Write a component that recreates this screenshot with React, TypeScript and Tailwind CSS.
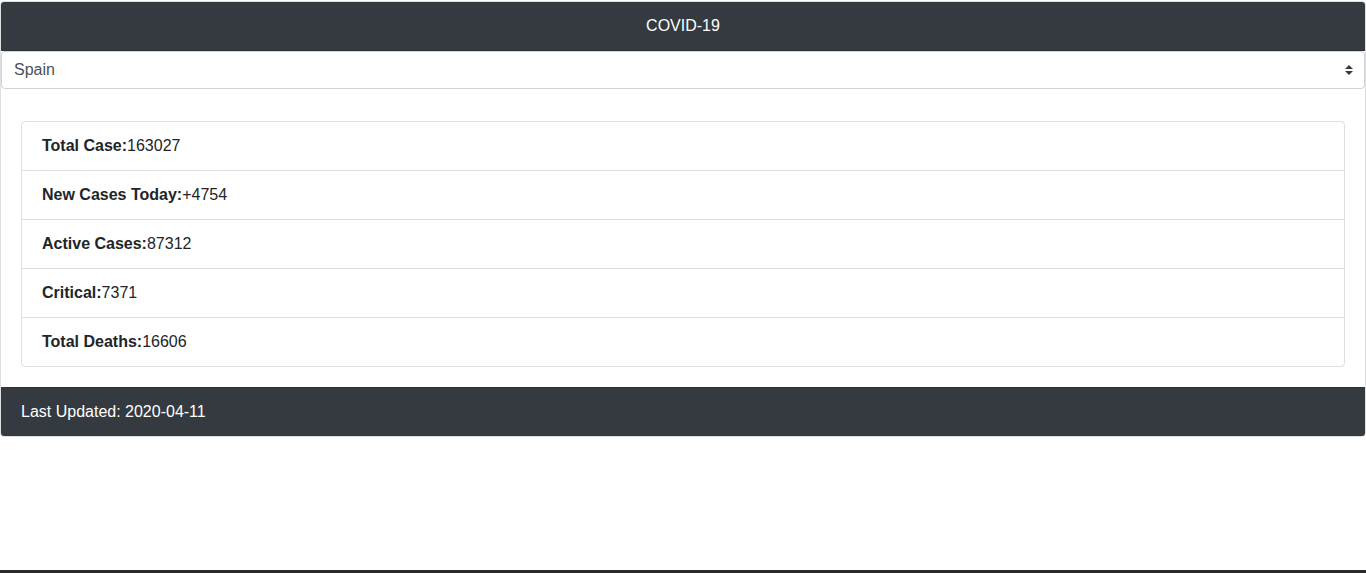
import React from 'react'

const stats = [
  { label: 'Total Case:', value: '163027' },
  { label: 'New Cases Today:', value: '+4754' },
  { label: 'Active Cases:', value: '87312' },
  { label: 'Critical:', value: '7371' },
  { label: 'Total Deaths:', value: '16606' },
]

const App = () => {
  return (
    <div className="h-[573px] flex flex-col bg-white text-[#212529] text-base leading-6 font-['Liberation_Sans',Arial,sans-serif]">
      {/* Card */}
      <div className="mt-px border border-black/[.125] rounded flex flex-col">
        <div className="bg-[#343a40] text-white text-center py-3 rounded-t-[3px] border-b border-black/[.125]">
          COVID-19
        </div>

        <div className="relative">
          <select
            className="w-full h-[38px] appearance-none bg-white border border-[#ced4da] rounded pl-3 pr-8 text-[#495057] outline-none"
            defaultValue="Spain"
          >
            <option>Spain</option>
            <option>Italy</option>
            <option>USA</option>
          </select>
          {/* up/down caret */}
          <svg className="absolute right-[12px] top-[14px] pointer-events-none" width="8" height="10" viewBox="0 0 4 5">
            <path fill="#343a40" d="M2 0L0 2h4zm0 5L0 3h4z" />
          </svg>
        </div>

        <div className="px-5 pt-8 pb-5">
          <ul className="border border-black/[.125] rounded">
            {stats.map((s, i) => (
              <li
                key={s.label}
                className={`px-5 py-3 ${i > 0 ? 'border-t border-black/[.125]' : ''}`}
              >
                <b className="font-bold">{s.label}</b>
                {s.value}
              </li>
            ))}
          </ul>
        </div>

        <div className="bg-[#343a40] text-white px-5 py-3 rounded-b-[3px] border-t border-black/[.125]">
          Last Updated: 2020-04-11
        </div>
      </div>

      <div className="flex-1" />
      <div className="h-[3px] bg-[#2b2b2b]" />
    </div>
  )
}

export default App
